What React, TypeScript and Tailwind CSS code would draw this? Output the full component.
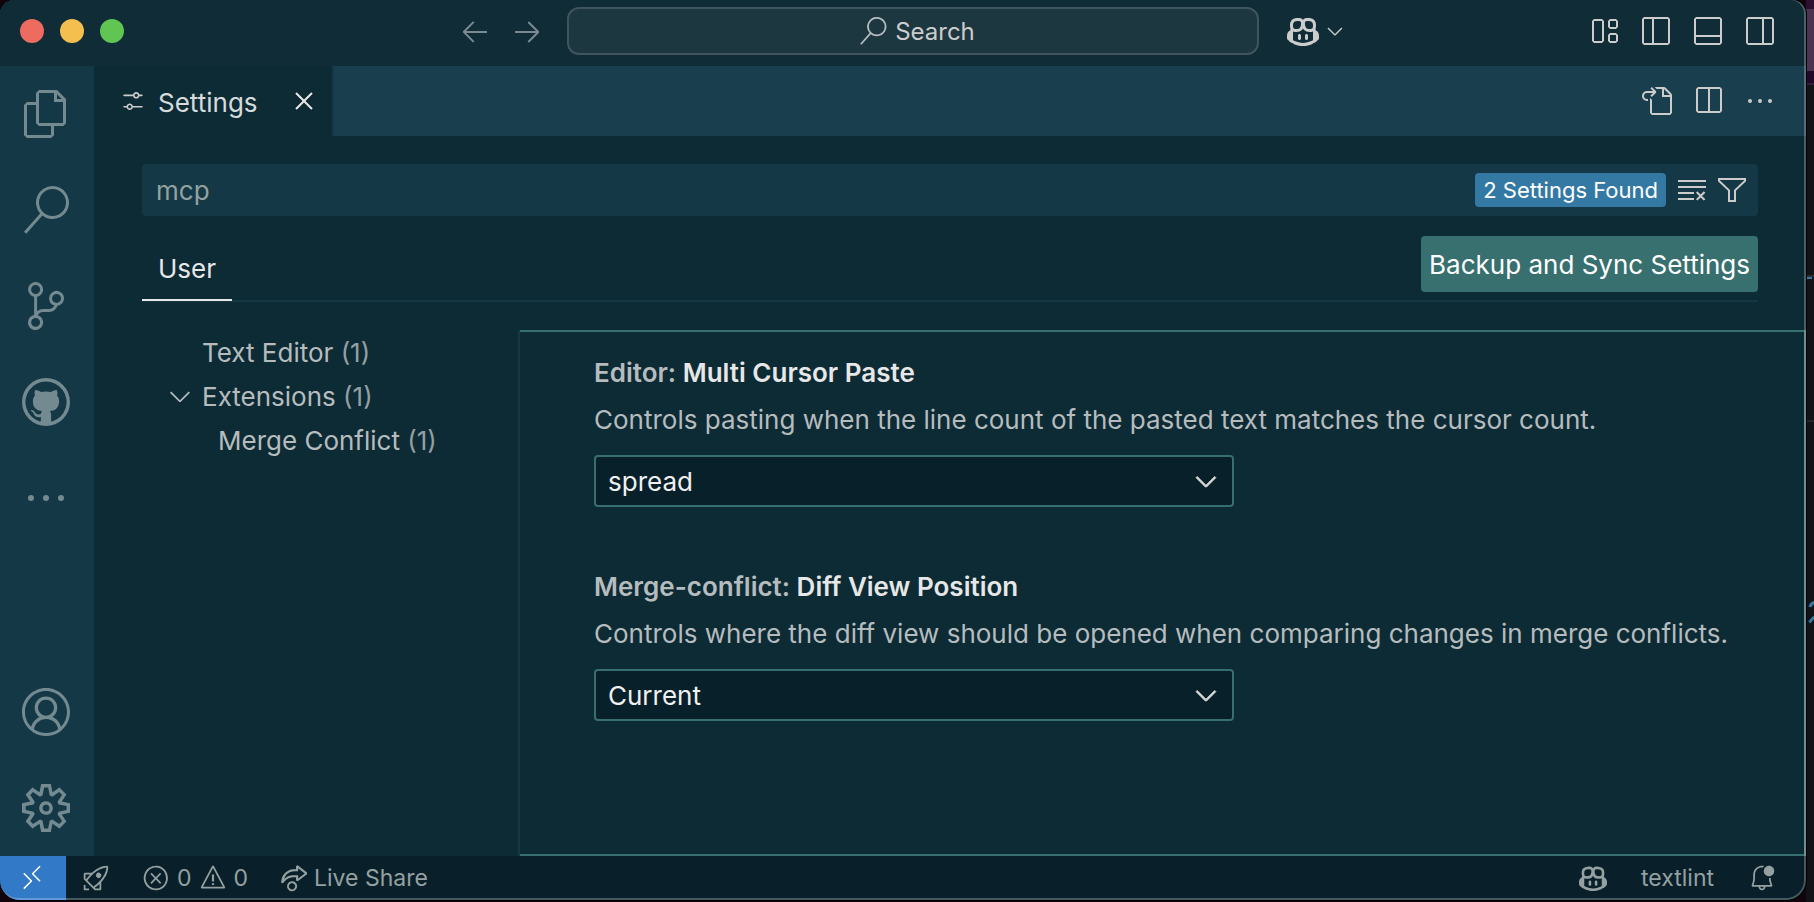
import { useState, type ReactNode } from "react";
import type { IconType } from "react-icons";
import {
  VscAccount,
  VscArrowLeft,
  VscArrowRight,
  VscBellDot,
  VscChevronDown,
  VscClearAll,
  VscClose,
  VscCopilot,
  VscEllipsis,
  VscError,
  VscFiles,
  VscFilter,
  VscGithub,
  VscGoToFile,
  VscLayout,
  VscLayoutPanelOff,
  VscLayoutSidebarLeftOff,
  VscLayoutSidebarRightOff,
  VscLiveShare,
  VscRemote,
  VscRocket,
  VscSearch,
  VscSettings,
  VscSettingsGear,
  VscSourceControl,
  VscSplitHorizontal,
  VscWarning,
} from "react-icons/vsc";

function IconButton({ icon: Icon, label, size = 32 }: { icon: IconType; label: string; size?: number }) {
  return (
    <button type="button" aria-label={label} className="flex items-center justify-center">
      <Icon size={size} />
    </button>
  );
}

function TitleBar() {
  return (
    <header className="grid h-[66px] shrink-0 grid-cols-[1fr_minmax(0,692px)_1fr] items-center bg-[#0f2c37] pb-1 pl-5 text-[#cccccc]">
      <div className="flex items-center justify-between pr-6">
        <div className="flex gap-4">
          <button type="button" aria-label="Close window" className="size-6 rounded-full bg-[#ed6b5f]" />
          <button type="button" aria-label="Minimize window" className="size-6 rounded-full bg-[#f5bf4f]" />
          <button type="button" aria-label="Zoom window" className="size-6 rounded-full bg-[#61c554]" />
        </div>
        <div className="flex gap-5 text-[#7b8a90]">
          <IconButton icon={VscArrowLeft} label="Go back" />
          <IconButton icon={VscArrowRight} label="Go forward" />
        </div>
      </div>
      <button
        type="button"
        className="flex h-12 items-center justify-center gap-2 rounded-xl border-2 border-[#3f545d] bg-[#1d3741] pl-2 text-2xl"
      >
        <VscSearch size={28} className="text-[#b4bcbf]" />
        <span className="pt-0.5">Search</span>
      </button>
      <div className="flex items-center justify-between pr-[30px] pl-7">
        <div className="flex items-center gap-1">
          <IconButton icon={VscCopilot} label="Chat" />
          <IconButton icon={VscChevronDown} label="Chat options" size={24} />
        </div>
        <div className="flex gap-5">
          <IconButton icon={VscLayout} label="Customize layout" />
          <IconButton icon={VscLayoutSidebarLeftOff} label="Toggle primary side bar" />
          <IconButton icon={VscLayoutPanelOff} label="Toggle panel" />
          <IconButton icon={VscLayoutSidebarRightOff} label="Toggle secondary side bar" />
        </div>
      </div>
    </header>
  );
}

const views: { icon: IconType; label: string }[] = [
  { icon: VscFiles, label: "Explorer" },
  { icon: VscSearch, label: "Search" },
  { icon: VscSourceControl, label: "Source Control" },
  { icon: VscGithub, label: "GitHub" },
  { icon: VscEllipsis, label: "Additional Views" },
];

function ActivityItem({ icon: Icon, label }: { icon: IconType; label: string }) {
  return (
    <button type="button" aria-label={label} className="flex h-24 w-full items-center justify-center">
      <Icon size={48} />
    </button>
  );
}

function ActivityBar() {
  return (
    <nav className="flex w-[94px] shrink-0 flex-col justify-between bg-[#153846] pr-0.5 text-[#738a91]">
      <div>
        {views.map((view) => (
          <ActivityItem key={view.label} {...view} />
        ))}
      </div>
      <div>
        <ActivityItem icon={VscAccount} label="Accounts" />
        <ActivityItem icon={VscSettingsGear} label="Manage" />
      </div>
    </nav>
  );
}

function TabBar() {
  return (
    <div className="flex h-[70px] shrink-0 items-center justify-between bg-[#193f4f] pr-[30px] text-[#cccccc]">
      <div className="flex h-full items-center border-r-2 border-[#153846] bg-[#0d2b35] pr-3 pl-[26px]">
        <VscSettings size={26} />
        <span className="ml-3 pt-0.5 text-[26px] text-[#d6dbdc]">Settings</span>
        <span className="ml-[30px] flex text-[#e8e8e8]">
          <IconButton icon={VscClose} label="Close tab" />
        </span>
      </div>
      <div className="flex gap-5">
        <IconButton icon={VscGoToFile} label="Open Settings (JSON)" />
        <IconButton icon={VscSplitHorizontal} label="Split editor" />
        <IconButton icon={VscEllipsis} label="More actions" />
      </div>
    </div>
  );
}

function TreeItem({ label, expanded, nested }: { label: string; expanded?: boolean; nested?: boolean }) {
  return (
    <li className={nested ? "flex h-11 items-center pl-[76px]" : "flex h-11 items-center pl-[22px]"}>
      {!nested && (
        <span className="mr-1.5 flex w-8 shrink-0">{expanded && <VscChevronDown size={32} />}</span>
      )}
      <button type="button" className="whitespace-nowrap">
        {label} <span className="text-[#949fa3]">(1)</span>
      </button>
    </li>
  );
}

interface SettingProps {
  id: string;
  category: string;
  name: string;
  options: string[];
  children: ReactNode;
}

function Setting({ id, category, name, options, children }: SettingProps) {
  const [value, setValue] = useState(options[0]);
  return (
    <section className="flex flex-col items-start">
      <label htmlFor={id} className="text-[26px] leading-9 font-semibold text-[#b6bcbe]">
        {category}: <span className="text-[#e7e7e7]">{name}</span>
      </label>
      <p className="mt-[11px] text-[26px] leading-9 text-[#b6bcbe]">{children}</p>
      <div className="mt-[17px] grid w-full max-w-[640px] items-center">
        <select
          id={id}
          value={value}
          onChange={(event) => setValue(event.target.value)}
          className="col-start-1 row-start-1 h-[52px] appearance-none rounded border-2 border-[#376f6e] bg-[#08202a] px-3 text-[26px] text-[#f0f0f0]"
        >
          {options.map((option) => (
            <option key={option}>{option}</option>
          ))}
        </select>
        <VscChevronDown
          size={32}
          strokeWidth={0.4}
          className="pointer-events-none col-start-1 row-start-1 mr-3 justify-self-end text-[#d8d8d8]"
        />
      </div>
    </section>
  );
}

function SettingsEditor() {
  const [query, setQuery] = useState("mcp");
  return (
    <main className="flex flex-1 flex-col bg-[#0d2b35] pt-7">
      <div className="mx-12 flex h-[52px] items-center rounded bg-[#153846] pr-2.5 text-[#cccccc]">
        <input
          aria-label="Search settings"
          value={query}
          onChange={(event) => setQuery(event.target.value)}
          className="h-full min-w-0 flex-1 bg-transparent px-3.5 text-[26px] text-[#93a1a1] outline-none"
        />
        <span className="mr-2.5 rounded bg-[#3479a3] px-2 text-[22px] leading-[34px] text-white">
          2 Settings Found
        </span>
        <div className="flex gap-2">
          <IconButton icon={VscClearAll} label="Clear settings search input" />
          <IconButton icon={VscFilter} label="Filter settings" />
        </div>
      </div>

      <div className="mx-12 mt-5 flex h-[66px] items-start justify-between border-b-2 border-[#153846]">
        <button
          type="button"
          className="h-[65px] border-b-2 border-[#e7e7e7] px-4 pt-0.5 text-[26px] text-[#e7e7e7]"
        >
          User
        </button>
        <button type="button" className="h-14 rounded bg-[#37706f] px-2 text-[26px] text-white">
          Backup and Sync Settings
        </button>
      </div>

      <div className="mt-7 flex flex-1">
        <ul className="w-[426px] shrink-0 border-r-2 border-[#153846] pl-12 text-[26px] text-[#b6bcbe]">
          <TreeItem label="Text Editor" />
          <TreeItem label="Extensions" expanded />
          <TreeItem label="Merge Conflict" nested />
        </ul>
        <div className="flex flex-1 flex-col gap-[62px] border-y-2 border-r-2 border-[#376f6e] pt-[23px] pr-8 pl-[74px]">
          <Setting
            id="multi-cursor-paste"
            category="Editor"
            name="Multi Cursor Paste"
            options={["spread", "full"]}
          >
            Controls pasting when the line count of the pasted text matches the cursor count.
          </Setting>
          <Setting
            id="diff-view-position"
            category="Merge-conflict"
            name="Diff View Position"
            options={["Current", "Beside", "Below"]}
          >
            Controls where the diff view should be opened when comparing changes in merge conflicts.
          </Setting>
        </div>
      </div>
    </main>
  );
}

function StatusBar() {
  return (
    <footer className="flex h-11 shrink-0 items-center justify-between bg-[#09202a] pr-[30px] text-[23px] text-[#95a0a1]">
      <div className="flex h-full items-center">
        <button
          type="button"
          aria-label="Open a remote window"
          className="mr-4 flex h-full w-[66px] items-center justify-center bg-[#327ac7] pr-0.5 text-white"
        >
          <VscRemote size={28} />
        </button>
        <IconButton icon={VscRocket} label="Launch" size={28} />
        <button type="button" aria-label="Problems" className="ml-8 flex items-center gap-[7px]">
          <VscError size={28} />
          <span>0</span>
          <VscWarning size={28} />
          <span>0</span>
        </button>
        <button type="button" className="ml-8 flex items-center gap-1.5">
          <VscLiveShare size={28} />
          <span>Live Share</span>
        </button>
      </div>
      <div className="flex items-center gap-[34px]">
        <IconButton icon={VscCopilot} label="Copilot status" size={28} />
        <button type="button">textlint</button>
        <IconButton icon={VscBellDot} label="Notifications" size={28} />
      </div>
    </footer>
  );
}

/* The sliver of the desktop that shows beside the window. */
function Backdrop() {
  return (
    <div className="flex w-2 shrink-0 flex-col overflow-hidden bg-[#121316]">
      <div className="h-[9px] bg-[#2d1030]" />
      <div className="h-[62px] bg-[#4c3350]" />
      <div className="h-3.5 border-b-2 border-[#34203a] bg-[#220828]" />
      <div className="h-[192px] border-b-2 border-[#2a2b2e]" />
      <div className="h-0.5 w-1.5 bg-[#3479a3]" />
      <div className="h-[143px] border-b-2 border-[#25262a]" />
      <svg viewBox="0 0 8 24" className="mt-[178px] h-6 w-2" fill="none" stroke="#3479a3" strokeWidth="3">
        <path d="M4 7C4.500 5 6 3 8.500 2.500M3.500 22.500C5 20 6.500 18.500 8.500 17" />
      </svg>
    </div>
  );
}

export default function App() {
  return (
    <div className="flex min-h-screen bg-[#12040d] font-['Inter',sans-serif]">
      <div className="relative mb-0.5 flex min-w-0 flex-1 flex-col overflow-hidden rounded-t-[14px] rounded-b-[20px] shadow-[0_0_0_1px_#000]">
        <TitleBar />
        <div className="flex flex-1">
          <ActivityBar />
          <div className="flex min-w-0 flex-1 flex-col">
            <TabBar />
            <SettingsEditor />
          </div>
        </div>
        <StatusBar />
        <div className="pointer-events-none absolute inset-0 -top-0.5 -left-0.5 rounded-t-[16px] rounded-b-[20px] border-2 border-white/25" />
      </div>
      <Backdrop />
    </div>
  );
}
